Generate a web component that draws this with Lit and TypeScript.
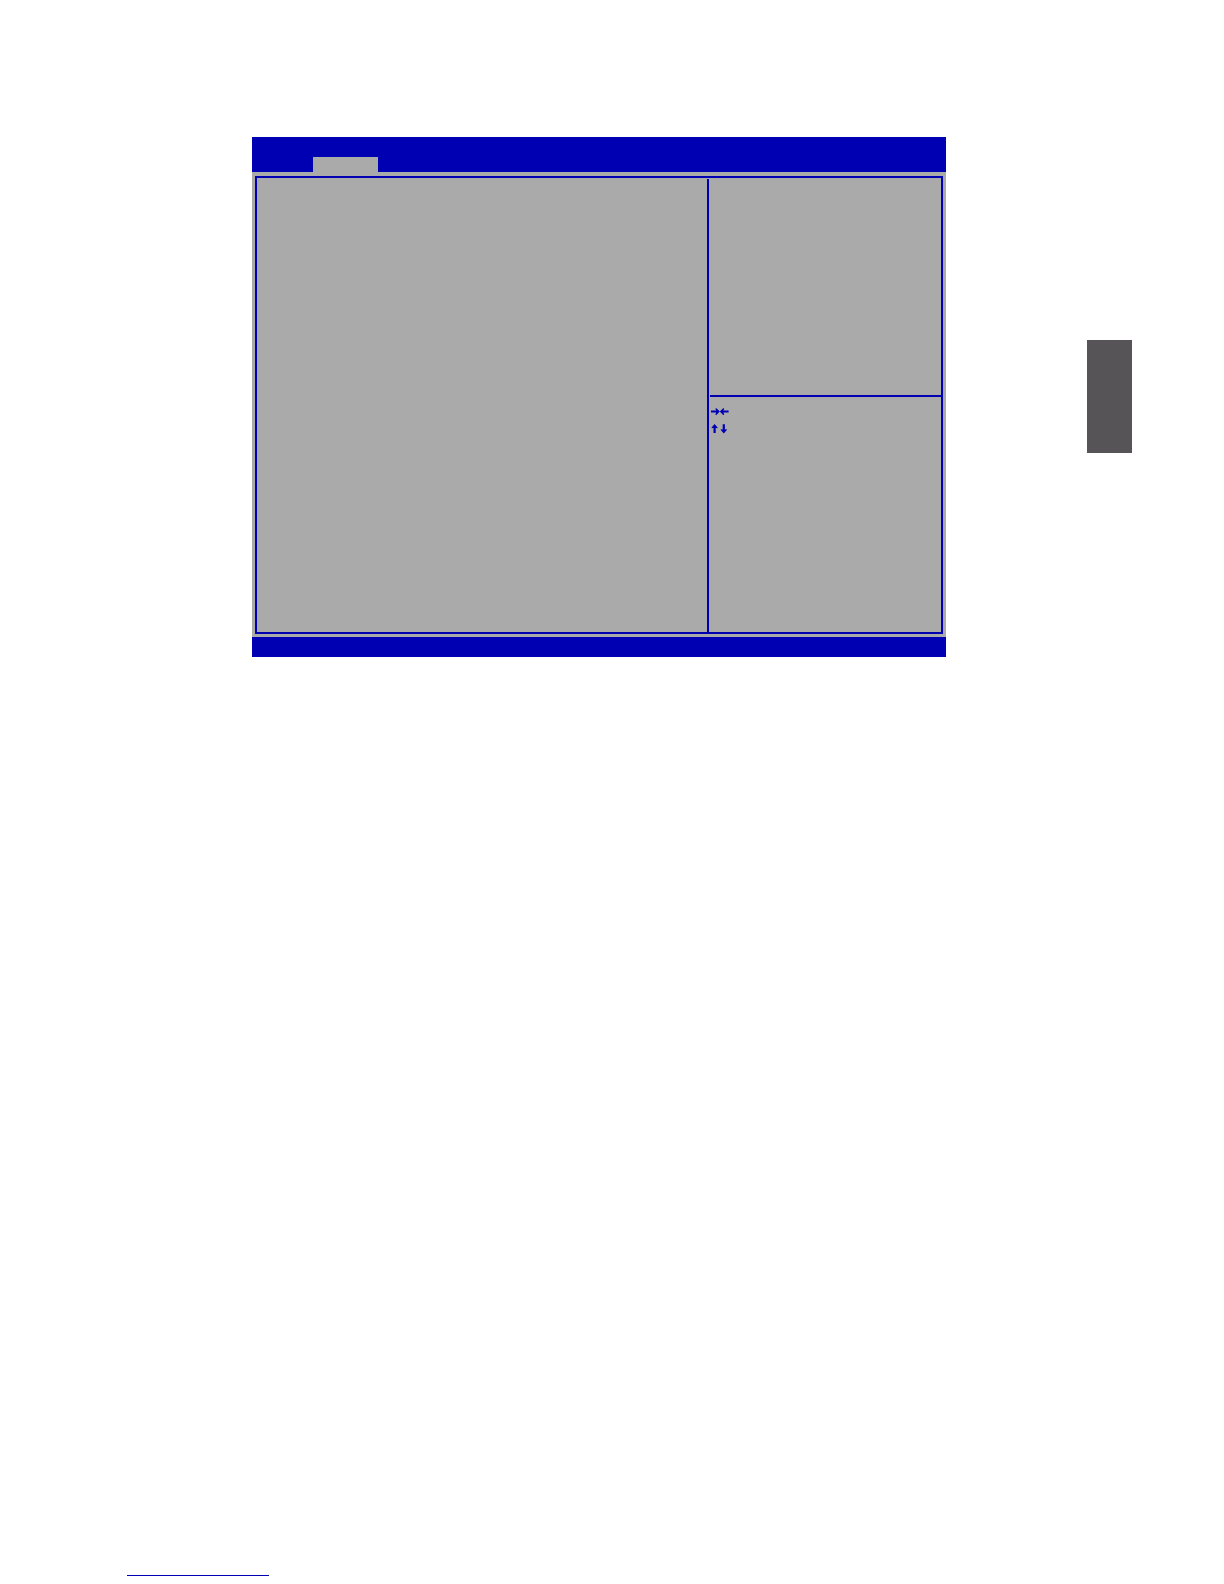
import { LitElement, html, css, svg } from "lit";
import { customElement, property } from "lit/decorators.js";

const HORIZONTAL = svg`
  <path d="M0 4.6H6M12 4.6H17.6" stroke="currentColor" stroke-width="2" />
  <path d="M4.4 1.4L5.4 1.2L8.8 4.6L5.4 8L4.4 7.8L5.4 4.6ZM13.2 1.4L12.2 1.2L8.8 4.6L12.2 8L13.2 7.8L12.2 4.6Z" fill="currentColor" />`;

const VERTICAL = svg`
  <path d="M3.6 9V3M12.8 0.2V6" stroke="currentColor" stroke-width="2.2" />
  <path d="M0.6 4.2V3.4L3.6 0L6.6 3.4V4.2L3.6 3.8ZM9.8 5.2V6L12.8 9.4L15.8 6V5.2L12.8 5.6Z" fill="currentColor" />`;

@customElement("key-arrows")
class KeyArrows extends LitElement {
  @property() axis = "horizontal";

  static styles = css`
    :host { display: block; }
    .icon { display: block; width: 18px; height: 10px; }
  `;

  render() {
    return html`<svg class="icon" viewBox="0 0 18 10" aria-hidden="true">
      ${this.axis === "horizontal" ? HORIZONTAL : VERTICAL}
    </svg>`;
  }
}

@customElement("setup-screen")
class SetupScreen extends LitElement {
  static styles = css`
    :host {
      --blue: #0000b3;
      --grey: #aaaaaa;
      display: flex;
      flex-direction: column;
      aspect-ratio: 694 / 520;
      background: var(--grey);
      color: var(--blue);
    }
    .menu {
      display: flex;
      align-items: flex-end;
      height: 35px;
      padding-left: 61px;
      background: var(--blue);
    }
    .tab {
      width: 65px;
      height: 15px;
      background: var(--grey);
    }
    .body {
      flex: 1;
      display: flex;
      padding: 4px 3px 3px;
    }
    .frame {
      flex: 1;
      display: grid;
      grid-template-columns: 450fr 234fr;
      padding-top: 1px;
      border: 2px solid var(--blue);
    }
    .side {
      display: grid;
      grid-template-rows: 216fr 237fr;
      padding-left: 1px;
      border-left: 2px solid var(--blue);
    }
    .keys {
      display: flex;
      flex-direction: column;
      gap: 7px;
      padding: 10px 1px;
      border-top: 2px solid var(--blue);
    }
    .status {
      height: 20px;
      background: var(--blue);
    }
  `;

  render() {
    return html`
      <div class="menu"><div class="tab"></div></div>
      <div class="body">
        <div class="frame">
          <div class="options"></div>
          <div class="side">
            <div class="help"></div>
            <div class="keys">
              <key-arrows axis="horizontal"></key-arrows>
              <key-arrows axis="vertical"></key-arrows>
            </div>
          </div>
        </div>
      </div>
      <div class="status"></div>
    `;
  }
}

@customElement("app-root")
class AppRoot extends LitElement {
  static styles = css`
    :host {
      display: flex;
      flex-direction: column;
      justify-content: space-between;
      box-sizing: border-box;
      min-height: 100vh;
      padding: 137px 92px 8px 127px;
      background: #ffffff;
      font-family: "Liberation Sans", sans-serif;
    }
    .sheet {
      display: flex;
      align-items: flex-start;
      gap: 141px;
      padding-left: 125px;
    }
    .screen { flex: 1; }
    .marker {
      width: 45px;
      height: 113px;
      margin-top: 203px;
      background: #565457;
    }
    .rule {
      width: 142px;
      height: 1px;
      background: #0000b3;
    }
  `;

  render() {
    return html`
      <main class="sheet">
        <setup-screen class="screen"></setup-screen>
        <div class="marker"></div>
      </main>
      <footer><div class="rule"></div></footer>
    `;
  }
}
